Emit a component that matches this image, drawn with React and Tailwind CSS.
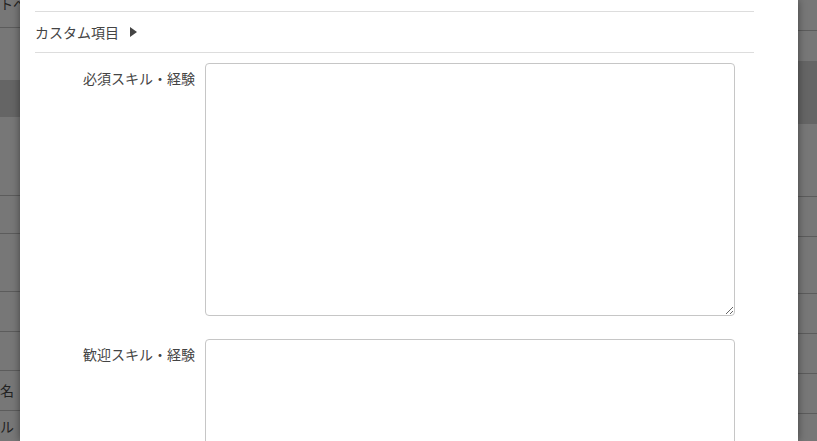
import React from "react"

const font = { fontFamily: '"Noto Sans CJK JP", "Noto Sans", sans-serif' }

function Field({ label, height }) {
  return (
    <div className="flex items-start">
      <label className="w-[170px] shrink-0 pr-[10px] pt-[5px] text-right text-[14px] leading-[20px] text-[#444]">{label}</label>
      <textarea
        className="w-[530px] rounded-[4px] border border-[#c6c6c6] bg-white outline-none"
        style={{ height }}
      />
    </div>
  )
}

export default function App() {
  return (
    <div className="relative h-[441px] w-[817px] overflow-hidden bg-[#777]" style={font}>
      {/* dimmed page behind the dialog */}
      <div className="flex h-full w-full justify-between">
        <div className="flex w-[20px] flex-col overflow-hidden text-[14px] text-[#222]">
          <div className="h-[31px] border-b border-[#5c5c5c] whitespace-nowrap text-[13px] leading-[14px] -mt-[3px]">トへ</div>
          <div className="h-[53px]" />
          <div className="h-[37px] bg-[#656565]" />
          <div className="h-[79px] border-b border-[#5c5c5c]" />
          <div className="h-[39px] border-b border-[#5c5c5c]" />
          <div className="h-[58px] border-b border-[#5c5c5c]" />
          <div className="h-[40px] border-b border-[#5c5c5c]" />
          <div className="h-[40px] border-b border-[#5c5c5c]" />
          <div className="flex h-[40px] items-center border-b border-[#5c5c5c] whitespace-nowrap">名</div>
          <div className="flex h-[30px] items-center whitespace-nowrap">ル</div>
        </div>
        <div className="flex w-[19px] flex-col">
          <div className="h-[31px] border-b border-[#5c5c5c]" />
          <div className="h-[30px]" />
          <div className="h-[63px] bg-[#656565]" />
          <div className="h-[73px] border-b border-[#5c5c5c]" />
          <div className="h-[40px] border-b border-[#5c5c5c]" />
          <div className="h-[57px] border-b border-[#5c5c5c]" />
          <div className="h-[40px] border-b border-[#5c5c5c]" />
          <div className="h-[40px] border-b border-[#5c5c5c]" />
          <div className="h-[40px] border-b border-[#5c5c5c]" />
        </div>
      </div>

      {/* dialog */}
      <div className="absolute left-[20px] top-0 h-full w-[778px] bg-white px-[15px] shadow-[0_0_8px_rgba(0,0,0,0.45)]">
        <div className="w-[719px]">
          <div className="mt-[11px] border-t border-[#ddd]" />
          <div className="flex h-[40px] items-center gap-[11px] text-[14px] text-[#444]">
            <span>カスタム項目</span>
            <svg width="7" height="10" viewBox="0 0 7 10">
              <path d="M0 0 L7 5 L0 10 Z" fill="#444" />
            </svg>
          </div>
          <div className="border-t border-[#ddd]" />
          <div className="mt-[10px] flex flex-col gap-[23px]">
            <Field label="必須スキル・経験" height={253} />
            <Field label="歓迎スキル・経験" height={253} />
          </div>
        </div>
      </div>
    </div>
  )
}
